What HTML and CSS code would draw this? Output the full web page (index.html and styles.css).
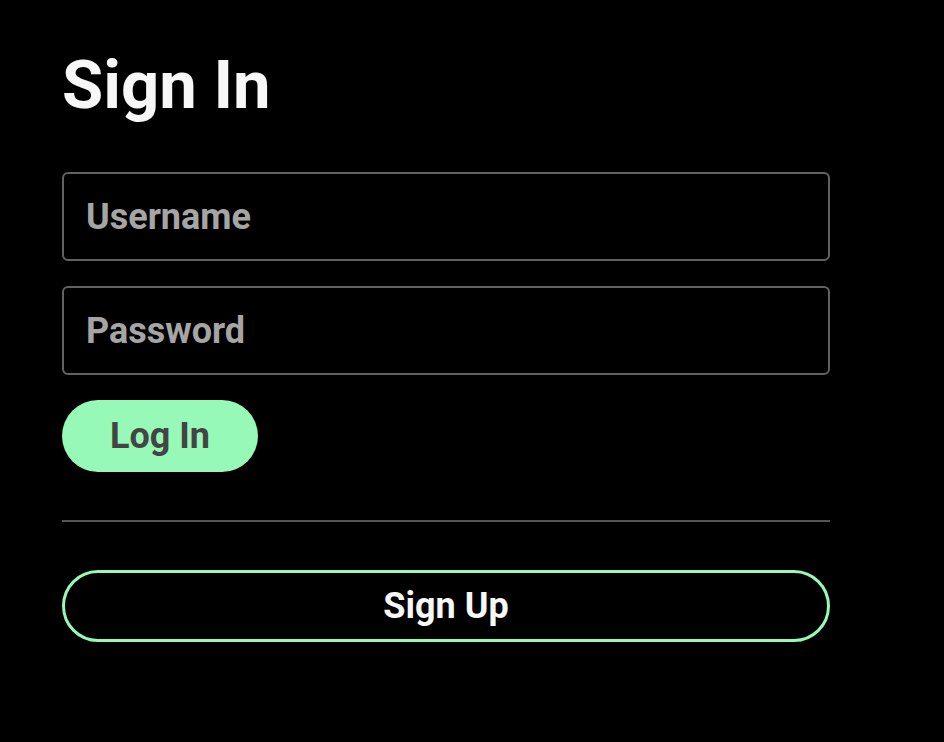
FILE: index.html
```html
<!DOCTYPE html>
<html lang="en">
<head>
<meta charset="utf-8">
<title>Sign In</title>
<link rel="stylesheet" href="styles.css">
</head>
<body>
<main class="page">
  <h1 class="title">Sign In</h1>
  <form class="form">
    <input class="field" type="text" placeholder="Username">
    <input class="field field-second" type="password" placeholder="Password">
    <button class="login" type="button">Log In</button>
  </form>
  <hr class="divider">
  <button class="signup" type="button">Sign Up</button>
</main>
</body>
</html>
```
FILE: styles.css
```css
html, body {
  margin: 0;
  padding: 0;
  background: #000;
}
body {
  font-family: Roboto, "Liberation Sans", sans-serif;
  color: #f7f7f7;
}
.page {
  width: 768px;
  padding: 51px 0 0 62px;
  display: flex;
  flex-direction: column;
}
.title {
  margin: 0;
  font-size: 67px;
  line-height: 68px;
  font-weight: 700;
  color: #f7f7f7;
}
.form {
  margin-top: 53px;
  display: flex;
  flex-direction: column;
  align-items: flex-start;
}
.field {
  box-sizing: border-box;
  width: 768px;
  height: 89px;
  padding: 0 22px;
  background: #000;
  border: 2px solid #626262;
  border-radius: 6px;
  font-family: inherit;
  font-size: 36px;
  font-weight: 700;
  color: #f7f7f7;
  outline: none;
}
.field::placeholder {
  color: #a5a5a5;
  opacity: 1;
}
.field-second {
  margin-top: 25px;
}
.login {
  margin-top: 25px;
  width: 196px;
  height: 72px;
  border: none;
  border-radius: 36px;
  background: #97f9b8;
  color: #444;
  font-family: inherit;
  font-size: 36px;
  font-weight: 700;
  padding: 0;
}
.divider {
  margin: 48px 0 0;
  height: 2px;
  border: none;
  background: #555;
  width: 768px;
}
.signup {
  margin-top: 48px;
  box-sizing: border-box;
  width: 768px;
  height: 72px;
  border: 3px solid #97f9b8;
  border-radius: 36px;
  background: #000;
  color: #f7f7f7;
  font-family: inherit;
  font-size: 36px;
  font-weight: 700;
  padding: 0;
}
```
